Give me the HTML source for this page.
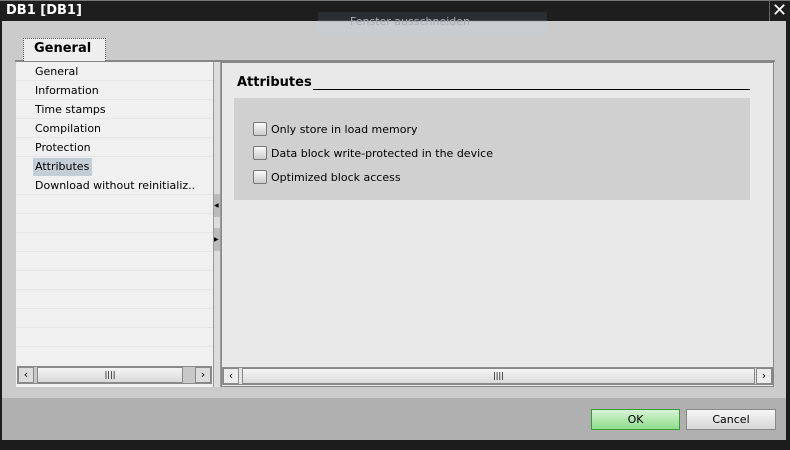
<!DOCTYPE html>
<html><head><style>
*{margin:0;padding:0;box-sizing:border-box}
body{width:790px;height:450px;overflow:hidden;background:#1c1c1c;font-family:"DejaVu Sans","Liberation Sans",sans-serif;font-size:11px;color:#000;position:relative}
.a{position:absolute}
.title{left:0;top:0;width:790px;height:21px;background:#1e1e1e;border-top:1px solid #777}
.title span{position:absolute;left:6px;top:2px;color:#fff;font-weight:bold;font-size:13px}
.close{left:769px;top:1px;width:20px;height:20px;border-left:1px solid #666;color:#fff;font-size:18px;text-align:center;line-height:19px}
.body{left:2px;top:21px;width:784px;height:377px;background:#cbcbcb}
.foot{left:2px;top:398px;width:784px;height:42px;background:#b0b0b0}
.tab{left:23px;top:38px;width:83px;height:23px;background:#eeeeee;border:1px dotted #555;border-bottom:none;font-weight:bold;font-size:13px;padding:2px 0 0 10px}
.list{left:16px;top:62px;width:197px;height:325px;background:#f0f0f0}
.row{position:absolute;left:0;width:197px;height:19px;border-bottom:1px solid #e6e6e6;padding:3px 0 0 19px}
.sel{background:#c3cdd6}
.right{left:221px;top:61px;width:553px;height:326px;background:#e9e9e9;border:1px solid #888;border-top:2px solid #888}
.sb{background:#dcdcdc;border:1px solid #8a8a8a}
.btn{border:1px solid #888;text-align:center;line-height:18px;font-size:11px}
.cb{position:absolute;left:253px;width:14px;height:14px;border:1px solid #777;border-radius:2px;background:linear-gradient(#fafafa,#ccc)}
.lbl{position:absolute;left:271px}
</style></head><body>
<div class="a title"><span>DB1 [DB1]</span></div>
<div class="a close">✕</div>
<div class="a body"></div>
<div class="a" style="left:318px;top:12px;width:229px;height:21px;background:linear-gradient(#2a2d31 0,#2a2d31 40%,#c8cdd1 45%);color:#a8adb5;font-size:11px;padding:3px 0 0 32px">Fenster ausschneiden</div>
<div class="a foot"></div>
<div class="a" style="left:15px;top:60px;width:760px;height:2px;background:#888"></div>
<div class="a tab">General</div>
<div class="a list">
<div class="row" style="top:0">General</div>
<div class="row" style="top:19px">Information</div>
<div class="row" style="top:38px">Time stamps</div>
<div class="row" style="top:57px">Compilation</div>
<div class="row" style="top:76px">Protection</div>
<div class="row" style="top:95px;padding-left:0;border:none;padding-top:1px"><span class="sel" style="margin-left:17px;padding:2px 3px 3px 2px;display:inline-block">Attributes</span></div>
<div class="row" style="top:114px">Download without reinitializ..</div>
<div class="row" style="top:133px"></div><div class="row" style="top:152px"></div><div class="row" style="top:171px"></div><div class="row" style="top:190px"></div><div class="row" style="top:209px"></div><div class="row" style="top:228px"></div><div class="row" style="top:247px"></div><div class="row" style="top:266px"></div>
</div>
<div class="a" style="left:213px;top:62px;width:8px;height:325px;background:#dcdcdc;border-left:1px solid #999;border-right:1px solid #999"></div>
<div class="a" style="left:214px;top:194px;width:6px;height:23px;background:#bbb;font-size:6px;line-height:23px">◀</div>
<div class="a" style="left:214px;top:228px;width:6px;height:23px;background:#bbb;font-size:6px;line-height:23px">▶</div>
<div class="a sb" style="left:17px;top:366px;width:195px;height:18px;background:#c8c8c8"></div>
<div class="a btn sb" style="left:18px;top:367px;width:16px;height:16px;line-height:14px">‹</div>
<div class="a btn" style="left:37px;top:367px;width:146px;height:16px;background:linear-gradient(#f4f4f4,#d8d8d8);line-height:14px;font-size:8px">||||</div>
<div class="a btn sb" style="left:195px;top:367px;width:16px;height:16px;line-height:14px">›</div>
<div class="a right"></div>
<div class="a" style="left:237px;top:75px;font-weight:bold;font-size:13px">Attributes</div>
<div class="a" style="left:313px;top:89px;width:437px;height:1px;background:#000"></div>
<div class="a" style="left:234px;top:98px;width:516px;height:102px;background:#d0d0d0"></div>
<div class="cb" style="top:122px"></div><div class="lbl" style="top:123px">Only store in load memory</div>
<div class="cb" style="top:146px"></div><div class="lbl" style="top:147px">Data block write-protected in the device</div>
<div class="cb" style="top:170px"></div><div class="lbl" style="top:171px">Optimized block access</div>
<div class="a sb" style="left:222px;top:367px;width:551px;height:18px;background:#e4e4e4"></div>
<div class="a btn" style="left:223px;top:368px;width:16px;height:16px;background:#ececec;line-height:14px">‹</div>
<div class="a btn" style="left:242px;top:368px;width:513px;height:16px;background:linear-gradient(#f6f6f6,#dadada);line-height:14px;font-size:8px">||||</div>
<div class="a btn" style="left:756px;top:368px;width:16px;height:16px;background:#ececec;line-height:14px">›</div>
<div class="a btn" style="left:591px;top:409px;width:89px;height:21px;border-color:#3a9a3a;background:linear-gradient(#d8f3d6,#8fdc8b);line-height:19px">OK</div>
<div class="a btn" style="left:686px;top:409px;width:90px;height:21px;background:linear-gradient(#f6f6f6,#d6d6d6);line-height:19px">Cancel</div>
<div class="a" style="left:786px;top:21px;width:4px;height:420px;background:#1c1c1c"></div>
<div class="a" style="left:0;top:21px;width:2px;height:420px;background:#1c1c1c"></div>
</body></html>
